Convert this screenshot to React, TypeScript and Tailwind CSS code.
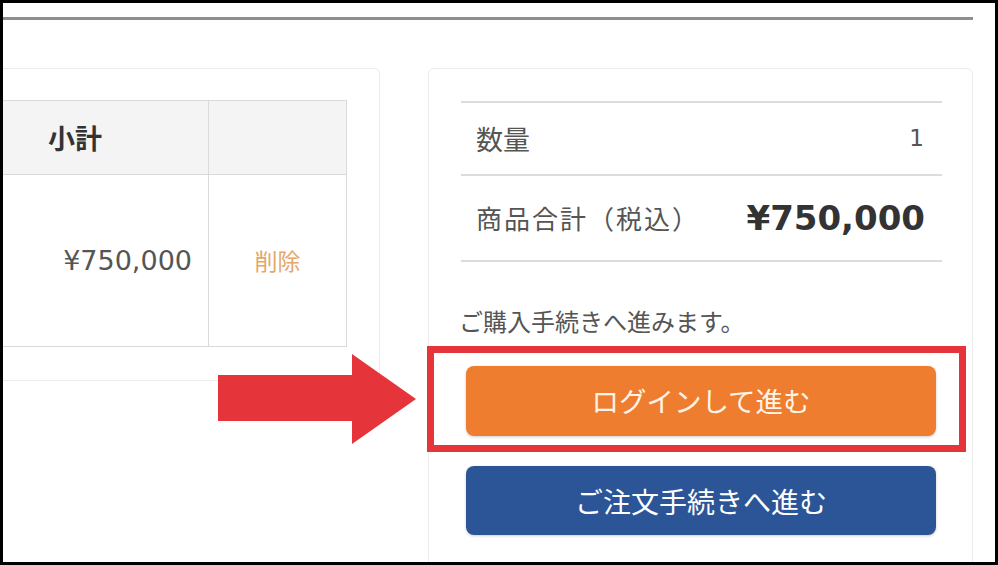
export default function App() {
  return (
    <div className="relative h-[565px] w-[998px] overflow-hidden border-[3px] border-black bg-white font-['Noto_Sans_CJK_JP',sans-serif] text-[#555]">
      <div className="mt-[14px] h-[3px] w-[970px] bg-[#8e8e8e]" />

      <div className="mt-[48px] flex items-start">
        {/* cart table card, cut off at the left */}
        <div className="h-[313px] w-[377px] rounded-r-md border border-l-0 border-[#ececec] pt-[31px]">
          <div className="w-[344px] border border-l-0 border-[#dadada]">
            <div className="flex h-[74px] border-b border-[#dadada] bg-[#f4f4f4]">
              <div className="flex w-[206px] items-center border-r border-[#dadada] pl-[45px] text-[27px] font-bold leading-none text-[#333]">
                小計
              </div>
              <div className="flex-1" />
            </div>
            <div className="flex h-[171px]">
              <div className="flex w-[206px] items-center justify-end border-r border-[#dadada] pr-[16px] font-['DejaVu_Sans',sans-serif] text-[27px] leading-none text-[#555]">
                ¥750,000
              </div>
              <div className="flex flex-1 items-center justify-center text-[23px] leading-none text-[#e3a766]">
                削除
              </div>
            </div>
          </div>
        </div>

        {/* order summary card */}
        <div className="ml-[48px] h-[520px] w-[545px] rounded-t-md border border-[#ececec] pl-[32px] pr-[30px] pt-[32px]">
          <div className="flex h-[73px] items-center justify-between border-t-2 border-[#dcdcdc] pl-[15px] pr-[18px]">
            <span className="text-[27px] leading-none">数量</span>
            <span className="font-['DejaVu_Sans',sans-serif] text-[23px] leading-none">1</span>
          </div>
          <div className="flex h-[88px] items-center justify-between border-y-2 border-[#dcdcdc] pl-[15px] pr-[17px]">
            <span className="text-[26px] leading-none tracking-[2px]">商品合計（税込）</span>
            <span className="font-['DejaVu_Sans',sans-serif] text-[34px] font-bold leading-none text-[#333]">
              ¥750,000
            </span>
          </div>

          <p className="-ml-[2px] mt-[42px] h-[34px] text-[24px] leading-[34px] text-[#555]">ご購入手続きへ進みます。</p>

          <div className="relative ml-[5px] mt-[28px] w-[470px]">
            <div className="pointer-events-none absolute bottom-[-16px] left-[-39px] right-[-30px] top-[-20px] border-[7px] border-[#e5353a]" />
            <button className="flex h-[70px] w-full items-center justify-center rounded-lg bg-[#ee7d30] text-[27.5px] leading-none text-[#fff4e6] shadow-[0_1px_3px_rgba(0,0,0,0.2)]">
              ログインして進む
            </button>
          </div>

          <button className="ml-[5px] mt-[30px] flex h-[69px] w-[470px] items-center justify-center rounded-lg bg-[#2c5598] text-[28px] leading-none text-white shadow-[0_1px_3px_rgba(0,0,0,0.2)]">
            ご注文手続きへ進む
          </button>
        </div>
      </div>

      {/* annotation arrow */}
      <svg className="absolute left-[215px] top-[351px]" width="200" height="90" viewBox="0 0 200 90">
        <polygon points="0,21 134,21 134,0 198,45 134,90 134,67 0,67" fill="#e5353a" />
      </svg>
    </div>
  );
}
